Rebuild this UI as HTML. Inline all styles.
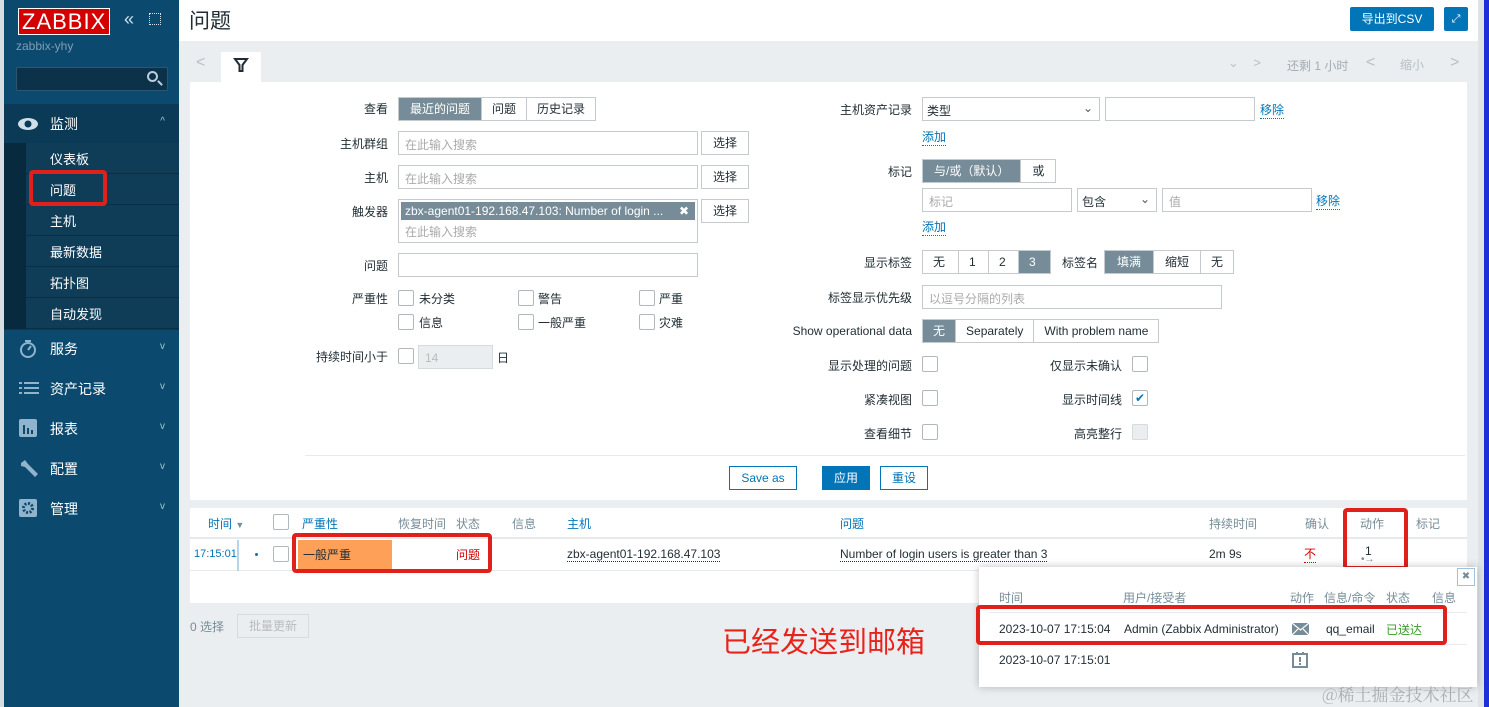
<!DOCTYPE html>
<html><head><meta charset="utf-8"><style>
*{box-sizing:border-box;margin:0;padding:0}
body{width:1489px;height:707px;overflow:hidden;background:#ebeef0;font-family:"Liberation Sans","Noto Sans CJK SC",sans-serif;font-size:12px;color:#1f2c33;position:relative}
.a{position:absolute;white-space:nowrap}
#side{position:absolute;left:0;top:0;width:179px;height:707px;background:#0b4a6e;border-left:4px solid #d7dde1}
.logo{left:14px;top:8px;background:#d40000;color:#fff;font-size:22px;letter-spacing:1px;padding:0 3px;line-height:25px;border:1px solid #fff}
.mi{left:0;width:175px;height:40px;color:#fff;font-size:14px}
.mi span{position:absolute;left:46px;top:10px}
.mi i{position:absolute;right:14px;top:12px;color:#9cc;font-style:normal;font-size:10px}
.sub{left:22px;width:153px;height:31px;background:#0f3d58;border-bottom:1px solid #0a2f44;color:#fff;font-size:13px}
.sub span{position:absolute;left:24px;top:6px}
.lbl{color:#1f2c33;text-align:right}
.inp{border:1px solid #c4cace;background:#fff;height:24px}
.ph{color:#aaa;position:absolute;left:6px;top:4px}
.btn{border:1px solid #c4cace;background:#fff;height:24px;text-align:center;line-height:22px}
.seg{display:flex;position:absolute;height:24px;border:1px solid #c4cace;background:#fff}
.seg div{padding:0 10px;line-height:22px;border-right:1px solid #c4cace}
.seg div:last-child{border-right:0}
.seg .on{background:#768d99;color:#fff}
.cb{width:16px;height:16px;border:1px solid #b0b8bd;background:#fff;border-radius:2px}
.link{color:#0275b8;border-bottom:1px dotted #0275b8}
.th{color:#768d99}
.thl{color:#0275b8}
.red{border:4px solid #e0201a;border-radius:4px}
</style></head><body>
<div id="side">
 <div class="a logo">ZABBIX</div>
 <div class="a" style="left:120px;top:9px;color:#cfe0ea;font-size:18px">«</div>
 <div class="a" style="left:145px;top:13px;width:12px;height:12px;border:1px dotted #cfe0ea"></div>
 <div class="a" style="left:12px;top:39px;color:#7f9fb5;font-size:12px">zabbix-yhy</div>
 <div class="a" style="left:12px;top:67px;width:152px;height:24px;background:#0c3249;border:1px solid #2a5673;border-radius:2px"></div>
 <div class="a" style="left:143px;top:71px;width:11px;height:11px;border:2px solid #bcd;border-radius:50%"></div>
 <div class="a" style="left:153px;top:82px;width:6px;height:2px;background:#bcd;transform:rotate(45deg)"></div>
 <div class="a" style="left:0;top:104px;width:175px;height:226px;background:#0a3a56"></div>
 <div class="a" style="left:0;top:143px;width:22px;height:186px;background:#072a3e"></div>
 <div class="a mi" style="top:104px"><svg class="a" style="left:13px;top:13px" width="22" height="14"><ellipse cx="11" cy="7" rx="10" ry="6" fill="#cfe0ea"/><circle cx="11" cy="7" r="3.5" fill="#0a3a56"/></svg><span>监测</span><i>^</i></div>
 <div class="a sub" style="top:143px"><span>仪表板</span></div>
 <div class="a sub" style="top:174px"><span>问题</span></div>
 <div class="a sub" style="top:205px"><span>主机</span></div>
 <div class="a sub" style="top:236px"><span>最新数据</span></div>
 <div class="a sub" style="top:267px"><span>拓扑图</span></div>
 <div class="a sub" style="top:298px"><span>自动发现</span></div>
 <div class="a red" style="left:25px;top:170px;width:78px;height:36px"></div>
 <div class="a mi" style="top:329px"><svg class="a" style="left:15px;top:10px" width="18" height="20"><circle cx="9" cy="11" r="7" fill="none" stroke="#8fb4cc" stroke-width="2"/><rect x="6" y="1" width="6" height="2" fill="#8fb4cc"/><line x1="9" y1="11" x2="12" y2="7" stroke="#8fb4cc" stroke-width="2"/></svg><span>服务</span><i>v</i></div>
 <div class="a mi" style="top:369px"><svg class="a" style="left:15px;top:12px" width="20" height="14"><g fill="#8fb4cc"><rect x="0" y="1" width="3" height="2"/><rect x="5" y="1" width="15" height="2"/><rect x="0" y="6" width="3" height="2"/><rect x="5" y="6" width="15" height="2"/><rect x="0" y="11" width="3" height="2"/><rect x="5" y="11" width="15" height="2"/></g></svg><span>资产记录</span><i>v</i></div>
 <div class="a mi" style="top:409px"><svg class="a" style="left:15px;top:10px" width="18" height="18"><rect width="18" height="18" rx="2" fill="#8fb4cc"/><g fill="#0b4a6e"><rect x="4" y="6" width="2" height="9"/><rect x="8" y="9" width="2" height="6"/><rect x="12" y="11" width="2" height="4"/></g></svg><span>报表</span><i>v</i></div>
 <div class="a mi" style="top:449px"><svg class="a" style="left:15px;top:10px" width="20" height="20"><path d="M2 4 L6 1 L9 5 L19 15 L16 18 L6 8 L2 7Z" fill="#8fb4cc"/></svg><span>配置</span><i>v</i></div>
 <div class="a mi" style="top:489px"><svg class="a" style="left:15px;top:10px" width="18" height="18"><rect width="18" height="18" rx="2" fill="#8fb4cc"/><circle cx="9" cy="9" r="4.5" fill="none" stroke="#0b4a6e" stroke-width="3" stroke-dasharray="2 1.5"/></svg><span>管理</span><i>v</i></div>
</div>
<div class="a" style="left:179px;top:0;width:1299px;height:41px;background:#fff"></div>
<div class="a" style="left:189px;top:5px;font-size:21px">问题</div>
<div class="a" style="left:1350px;top:7px;width:84px;height:24px;background:#0275b8;color:#fff;border-radius:2px;text-align:center;line-height:24px;font-size:12px">导出到CSV</div>
<div class="a" style="left:1444px;top:7px;width:24px;height:24px;background:#0275b8;border-radius:2px;color:#fff;font-size:11px;text-align:center;line-height:24px">⤢</div>
<div class="a" style="left:1478px;top:0;width:6px;height:707px;background:#dfe3e6"></div>
<div class="a" style="left:1484px;top:0;width:5px;height:707px;background:#1c2fd8"></div>
<div class="a" style="left:196px;top:54px;color:#b6c0c6;font-size:16px">&lt;</div>
<div class="a" style="left:221px;top:52px;width:40px;height:31px;background:#fff"></div>
<svg class="a" style="left:233px;top:57px" width="16" height="16"><path d="M2 2 H14 L9.5 8 V14 H6.5 V8 Z" fill="none" stroke="#1f2c33" stroke-width="2"/></svg>
<div class="a" style="left:1228px;top:55px;color:#b6c0c6;font-size:13px">⌄&nbsp;&nbsp;&nbsp;&nbsp;&gt;</div>
<div class="a" style="left:1287px;top:57px;color:#a3acb1">还剩 1 小时</div>
<div class="a" style="left:1366px;top:54px;color:#b6c0c6;font-size:16px">&lt;</div>
<div class="a" style="left:1400px;top:56px;color:#b6c0c6">缩小</div>
<div class="a" style="left:1450px;top:54px;color:#b6c0c6;font-size:16px">&gt;</div>
<div class="a" style="left:190px;top:82px;width:1277px;height:418px;background:#fff"></div>
<div class="a" style="left:305px;top:455px;width:1160px;height:1px;background:#e6eaec"></div>
<div class="a lbl" style="left:300px;top:100px;width:88px">查看</div>
<div class="seg" style="left:398px;top:97px"><div class="on" style="padding:0 11px">最近的问题</div><div>问题</div><div>历史记录</div></div>
<div class="a lbl" style="left:300px;top:135px;width:88px">主机群组</div>
<div class="a inp" style="left:398px;top:131px;width:300px"><span class="ph">在此输入搜索</span></div>
<div class="a btn" style="left:701px;top:131px;width:48px">选择</div>
<div class="a lbl" style="left:300px;top:169px;width:88px">主机</div>
<div class="a inp" style="left:398px;top:165px;width:300px"><span class="ph">在此输入搜索</span></div>
<div class="a btn" style="left:701px;top:165px;width:48px">选择</div>
<div class="a lbl" style="left:300px;top:203px;width:88px">触发器</div>
<div class="a inp" style="left:398px;top:199px;width:300px;height:44px"><div class="a" style="left:2px;top:2px;width:294px;height:18px;background:#768d99;color:#fff;padding-left:4px;line-height:18px">zbx-agent01-192.168.47.103: Number of login ...<span class="a" style="right:6px;top:0">✖</span></div><span class="ph" style="top:23px">在此输入搜索</span></div>
<div class="a btn" style="left:701px;top:199px;width:48px">选择</div>
<div class="a lbl" style="left:300px;top:257px;width:88px">问题</div>
<div class="a inp" style="left:398px;top:253px;width:300px"></div>
<div class="a lbl" style="left:300px;top:290px;width:88px">严重性</div>
<div class="a cb" style="left:398px;top:290px"></div><div class="a" style="left:419px;top:290px">未分类</div>
<div class="a cb" style="left:518px;top:290px"></div><div class="a" style="left:538px;top:290px">警告</div>
<div class="a cb" style="left:639px;top:290px"></div><div class="a" style="left:659px;top:290px">严重</div>
<div class="a cb" style="left:398px;top:314px"></div><div class="a" style="left:419px;top:314px">信息</div>
<div class="a cb" style="left:518px;top:314px"></div><div class="a" style="left:538px;top:314px">一般严重</div>
<div class="a cb" style="left:639px;top:314px"></div><div class="a" style="left:659px;top:314px">灾难</div>
<div class="a lbl" style="left:300px;top:348px;width:88px">持续时间小于</div>
<div class="a cb" style="left:398px;top:348px"></div>
<div class="a" style="left:418px;top:345px;width:75px;height:24px;background:#ebeef0;border:1px solid #d6dbde;color:#bbb;padding:5px 6px">14</div>
<div class="a" style="left:497px;top:349px">日</div>
<div class="a lbl" style="left:780px;top:101px;width:132px">主机资产记录</div>
<div class="a inp" style="left:922px;top:97px;width:178px"><span class="a" style="left:4px;top:4px">类型</span><span class="a" style="right:6px;top:3px;color:#555">⌄</span></div>
<div class="a inp" style="left:1105px;top:97px;width:150px"></div>
<div class="a link" style="left:1260px;top:101px">移除</div>
<div class="a link" style="left:922px;top:128px">添加</div>
<div class="a lbl" style="left:780px;top:163px;width:132px">标记</div>
<div class="seg" style="left:922px;top:159px"><div class="on" style="padding:0 11px">与/或（默认）</div><div style="padding:0 11px">或</div></div>
<div class="a inp" style="left:922px;top:188px;width:150px"><span class="ph">标记</span></div>
<div class="a inp" style="left:1077px;top:188px;width:80px"><span class="a" style="left:4px;top:4px">包含</span><span class="a" style="right:6px;top:3px;color:#555">⌄</span></div>
<div class="a inp" style="left:1162px;top:188px;width:150px"><span class="ph">值</span></div>
<div class="a link" style="left:1316px;top:192px">移除</div>
<div class="a link" style="left:922px;top:218px">添加</div>
<div class="a lbl" style="left:780px;top:254px;width:132px">显示标签</div>
<div class="seg" style="left:922px;top:250px"><div style="width:36px">无</div><div style="width:30px">1</div><div style="width:30px">2</div><div class="on" style="width:31px">3</div></div>
<div class="a" style="left:1062px;top:254px">标签名</div>
<div class="seg" style="left:1104px;top:250px"><div class="on" style="padding:0 12px">填满</div><div style="padding:0 11px">缩短</div><div>无</div></div>
<div class="a lbl" style="left:780px;top:289px;width:132px">标签显示优先级</div>
<div class="a inp" style="left:922px;top:285px;width:300px"><span class="ph">以逗号分隔的列表</span></div>
<div class="a lbl" style="left:780px;top:324px;width:132px">Show operational data</div>
<div class="seg" style="left:922px;top:319px"><div class="on">无</div><div>Separately</div><div>With problem name</div></div>
<div class="a lbl" style="left:780px;top:357px;width:132px">显示处理的问题</div><div class="a cb" style="left:922px;top:356px"></div>
<div class="a lbl" style="left:990px;top:357px;width:132px">仅显示未确认</div><div class="a cb" style="left:1132px;top:356px"></div>
<div class="a lbl" style="left:780px;top:391px;width:132px">紧凑视图</div><div class="a cb" style="left:922px;top:390px"></div>
<div class="a lbl" style="left:990px;top:391px;width:132px">显示时间线</div><div class="a cb" style="left:1132px;top:390px;color:#0275b8;font-size:12px;line-height:14px;text-align:center">✔</div>
<div class="a lbl" style="left:780px;top:425px;width:132px">查看细节</div><div class="a cb" style="left:922px;top:424px"></div>
<div class="a lbl" style="left:990px;top:425px;width:132px">高亮整行</div><div class="a cb" style="left:1132px;top:424px;background:#ebeef0;border-color:#d6dbde"></div>
<div class="a btn" style="left:729px;top:466px;width:68px;border-color:#0275b8;color:#0275b8">Save as</div>
<div class="a btn" style="left:822px;top:466px;width:48px;background:#0275b8;border-color:#0275b8;color:#fff">应用</div>
<div class="a btn" style="left:880px;top:466px;width:48px;border-color:#0275b8;color:#0275b8">重设</div>
<div class="a" style="left:190px;top:508px;width:1277px;height:95px;background:#fff"></div>
<div class="a" style="left:190px;top:537px;width:1277px;height:2px;background:#e6eaec"></div>
<div class="a" style="left:190px;top:570px;width:1277px;height:1px;background:#e6eaec"></div>
<div class="a thl" style="left:208px;top:515px">时间 <span style="color:#768d99;font-size:9px">▼</span></div>
<div class="a cb" style="left:273px;top:514px"></div>
<div class="a thl" style="left:302px;top:515px">严重性</div>
<div class="a th" style="left:398px;top:515px">恢复时间</div>
<div class="a th" style="left:456px;top:515px">状态</div>
<div class="a th" style="left:512px;top:515px">信息</div>
<div class="a thl" style="left:567px;top:515px">主机</div>
<div class="a thl" style="left:840px;top:515px">问题</div>
<div class="a th" style="left:1209px;top:515px">持续时间</div>
<div class="a th" style="left:1305px;top:515px">确认</div>
<div class="a th" style="left:1360px;top:515px">动作</div>
<div class="a th" style="left:1416px;top:515px">标记</div>
<div class="a" style="left:194px;top:548px;color:#0275b8;font-size:11px">17:15:01</div>
<div class="a" style="left:237px;top:540px;width:2px;height:31px;background:#b8d5e8"></div>
<div class="a" style="left:255px;top:553px;width:3px;height:3px;background:#0275b8;border-radius:50%"></div>
<div class="a cb" style="left:273px;top:546px"></div>
<div class="a" style="left:298px;top:540px;width:94px;height:30px;background:#ffa059;padding:6px 5px">一般严重</div>
<div class="a" style="left:456px;top:546px;color:#d40000">问题</div>
<div class="a" style="left:567px;top:547px;border-bottom:1px dotted #1f2c33">zbx-agent01-192.168.47.103</div>
<div class="a" style="left:840px;top:547px;border-bottom:1px dotted #1f2c33">Number of login users is greater than 3</div>
<div class="a" style="left:1209px;top:547px">2m 9s</div>
<div class="a" style="left:1304px;top:545px;color:#d40000;border-bottom:1px dotted #d40000">不</div>
<div class="a" style="left:1365px;top:544px;font-size:12px">1</div>
<div class="a" style="left:1361px;top:554px;color:#768d99;font-size:10px">•→</div>
<div class="a red" style="left:292px;top:533px;width:200px;height:40px"></div>
<div class="a red" style="left:1343px;top:508px;width:65px;height:62px"></div>
<div class="a" style="left:190px;top:618px;color:#768d99">0 选择</div>
<div class="a" style="left:237px;top:614px;width:72px;height:24px;border:1px solid #d6dbde;color:#bbb;text-align:center;line-height:22px">批量更新</div>
<div class="a" style="left:979px;top:567px;width:498px;height:120px;background:#fff;box-shadow:0 0 8px rgba(0,0,0,.25)"></div>
<div class="a" style="left:1457px;top:568px;width:18px;height:18px;border:1px solid #9fc3de;background:#fff;color:#768d99;text-align:center;line-height:16px;font-size:10px">✖</div>
<div class="a th" style="left:999px;top:589px">时间</div>
<div class="a th" style="left:1123px;top:589px">用户/接受者</div>
<div class="a th" style="left:1290px;top:589px">动作</div>
<div class="a th" style="left:1324px;top:589px">信息/命令</div>
<div class="a th" style="left:1386px;top:589px">状态</div>
<div class="a th" style="left:1432px;top:589px">信息</div>
<div class="a" style="left:989px;top:612px;width:478px;height:1px;background:#e6eaec"></div>
<div class="a" style="left:989px;top:644px;width:478px;height:1px;background:#e6eaec"></div>
<div class="a" style="left:999px;top:622px">2023-10-07 17:15:04</div>
<div class="a" style="left:1124px;top:622px">Admin (Zabbix Administrator)</div>
<svg class="a" style="left:1292px;top:623px" width="17" height="12"><rect width="17" height="12" fill="#768d99"/><path d="M0 0 L8.5 7 L17 0 M0 12 L6 6 M17 12 L11 6" stroke="#fff" stroke-width="1.2" fill="none"/></svg>
<div class="a" style="left:1326px;top:622px">qq_email</div>
<div class="a" style="left:1386px;top:621px;color:#3a9a2a">已送达</div>
<div class="a" style="left:999px;top:653px">2023-10-07 17:15:01</div>
<svg class="a" style="left:1292px;top:652px" width="16" height="16"><rect x="1" y="2" width="14" height="13" fill="none" stroke="#768d99" stroke-width="2"/><rect x="4" y="0" width="2" height="3" fill="#768d99"/><rect x="10" y="0" width="2" height="3" fill="#768d99"/><rect x="7" y="5" width="2" height="5" fill="#768d99"/><rect x="7" y="11" width="2" height="2" fill="#768d99"/></svg>
<div class="a red" style="left:976px;top:605px;width:471px;height:40px"></div>
<div class="a" style="left:722px;top:619px;color:#e8231c;font-size:29px">已经发送到邮箱</div>
<div class="a" style="left:1322px;top:681px;color:#a8adb0;font-size:17px;font-family:'Noto Serif CJK SC',serif">@稀土掘金技术社区</div>
</body></html>
